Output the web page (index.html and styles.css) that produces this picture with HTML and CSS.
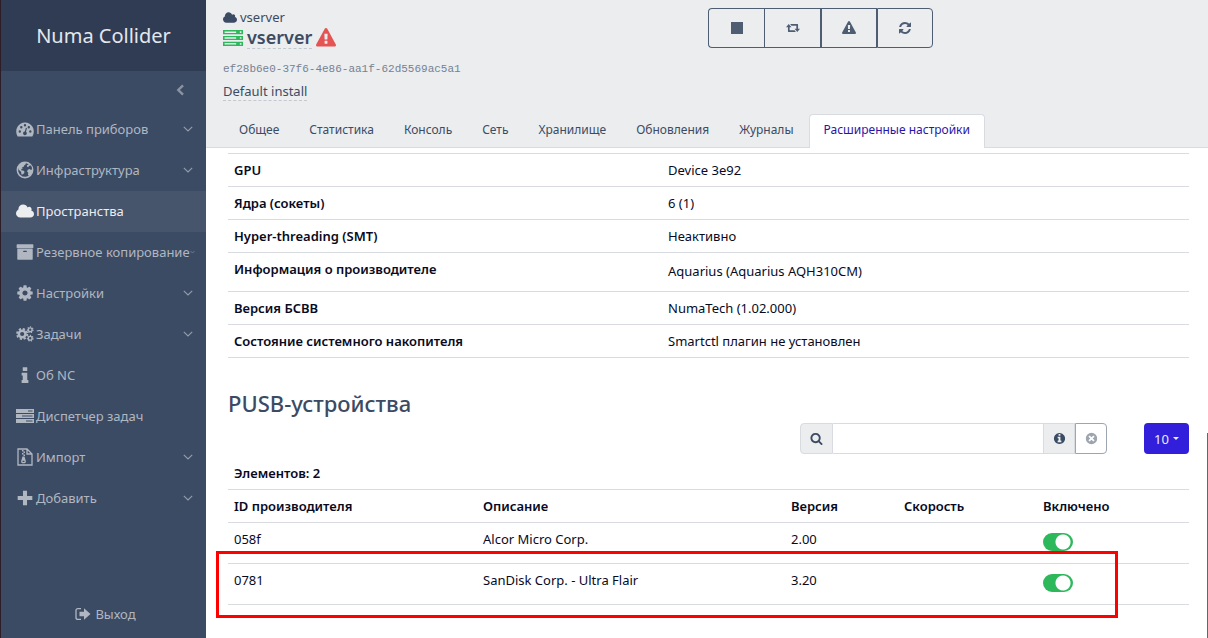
FILE: index.html
```html
<!DOCTYPE html>
<html lang="ru">
<head>
<meta charset="utf-8">
<title>vserver – Numa Collider</title>
<link rel="stylesheet" href="styles.css">
</head>
<body>
<svg class="sprite" aria-hidden="true">
  <symbol id="cloud" viewBox="64 128 1920 1408"><path d="M1984 1152q0 159-112.5 271.5T1600 1536H512q-185 0-316.5-131.5T64 1088q0-132 71-241.5T322 683q-2-28-2-43 0-212 150-362t362-150q158 0 286.5 88T1306 446q70-62 166-62 106 0 181 75t75 181q0 75-41 138 129 30 213 134.5t84 239.5z"/></symbol>
  <symbol id="warning" viewBox="0 0 1792 1792"><path d="M1024 1375v-190q0-14-9.5-23.5t-22.5-9.5h-192q-13 0-22.5 9.5t-9.5 23.5v190q0 14 9.5 23.5t22.5 9.5h192q13 0 22.5-9.5t9.5-23.5zm-2-374l18-459q0-12-10-19-13-11-24-11h-220q-11 0-24 11-10 7-10 21l17 457q0 10 10 16.5t24 6.5h185q14 0 23.5-6.5t10.5-16.5zm-14-934l768 1408q35 63-2 126-17 29-46.5 46t-63.5 17h-1536q-34 0-63.5-17t-46.5-46q-37-63-2-126l768-1408q17-31 47-49t65-18 65 18 47 49z"/></symbol>
  <symbol id="refresh" viewBox="0 0 1792 1792"><path d="M1639 1056q0 5-1 7-64 268-268 434.5t-478 166.5q-146 0-282.5-55t-243.5-157l-129 129q-19 19-45 19t-45-19-19-45v-448q0-26 19-45t45-19h448q26 0 45 19t19 45-19 45l-137 137q71 66 161 102t187 36q134 0 250-65t186-179q11-17 53-117 8-23 30-23h192q13 0 22.5 9.5t9.5 22.5zm25-800v448q0 26-19 45t-45 19h-448q-26 0-45-19t-19-45 19-45l138-138q-148-137-349-137-134 0-250 65t-186 179q-11 17-53 117-8 23-30 23h-199q-13 0-22.5-9.5t-9.5-22.5v-7q65-268 270-434.5t480-166.5q146 0 284 55.5t245 156.5l130-129q19-19 45-19t45 19 19 45z"/></symbol>
  <symbol id="cog" viewBox="0 0 1792 1792"><path d="M1152 896q0-106-75-181t-181-75-181 75-75 181 75 181 181 75 181-75 75-181zm512-109v222q0 12-8 23t-20 13l-185 28q-19 54-39 91 35 50 107 138 10 12 10 25t-9 23q-27 37-99 108t-94 71q-12 0-26-9l-138-108q-44 23-91 38-16 136-29 186-7 28-36 28h-222q-14 0-24.5-8.5t-11.5-21.5l-28-184q-49-16-90-37l-141 107q-10 9-25 9-14 0-25-11-126-114-165-168-7-10-7-23 0-12 8-23 15-21 51-66.5t54-70.5q-27-50-41-99l-183-27q-13-2-21-12.5t-8-23.5v-222q0-12 8-23t19-13l186-28q14-46 39-92-40-57-107-138-10-12-10-24 0-10 9-23 26-36 98.5-107.5t94.5-71.5q13 0 26 10l138 107q44-23 91-38 16-136 29-186 7-28 36-28h222q14 0 24.5 8.5t11.5 21.5l28 184q49 16 90 37l142-107q9-9 24-9 13 0 25 10 129 119 165 170 7 8 7 22 0 12-8 23-15 21-51 66.5t-54 70.5q26 50 41 98l183 28q13 2 21 12.5t8 23.5z"/></symbol>
  <symbol id="search" viewBox="0 0 1792 1792"><path d="M1216 832q0-185-131.5-316.5t-316.5-131.5-316.5 131.5-131.5 316.5 131.5 316.5 316.5 131.5 316.5-131.5 131.5-316.5zm512 832q0 52-38 90t-90 38q-54 0-90-38l-343-342q-179 124-399 124-143 0-273.5-55.5t-225-150-150-225-55.5-273.5 55.5-273.5 150-225 225-150 273.5-55.5 273.5 55.5 225 150 150 225 55.5 273.5q0 220-124 399l343 343q37 37 37 90z"/></symbol>
  <symbol id="info-circle" viewBox="0 0 1792 1792"><path d="M1152 1376v-160q0-14-9-23t-23-9h-96v-512q0-14-9-23t-23-9h-320q-14 0-23 9t-9 23v160q0 14 9 23t23 9h96v320h-96q-14 0-23 9t-9 23v160q0 14 9 23t23 9h448q14 0 23-9t9-23zm-128-896v-160q0-14-9-23t-23-9h-192q-14 0-23 9t-9 23v160q0 14 9 23t23 9h192q14 0 23-9t9-23zm640 416q0 209-103 385.5t-279.5 279.5-385.5 103-385.5-103-279.5-279.5-103-385.5 103-385.5 279.5-279.5 385.5-103 385.5 103 279.5 279.5 103 385.5z"/></symbol>
  <symbol id="archive" viewBox="0 0 1792 1792"><path d="M1088 832q0-26-19-45t-45-19h-256q-26 0-45 19t-19 45 19 45 45 19h256q26 0 45-19t19-45zm576-192v960q0 26-19 45t-45 19h-1408q-26 0-45-19t-19-45v-960q0-26 19-45t45-19h1408q26 0 45 19t19 45zm64-448v256q0 26-19 45t-45 19h-1536q-26 0-45-19t-19-45v-256q0-26 19-45t45-19h1536q26 0 45 19t19 45z"/></symbol>
  <symbol id="times-circle" viewBox="0 0 16 16"><path fill-rule="evenodd" d="M8 1a7 7 0 1 1 0 14A7 7 0 0 1 8 1zM5.7 4.2 4.2 5.7 6.5 8l-2.3 2.3 1.5 1.5L8 9.500l2.300 2.300 1.500-1.500L9.500 8l2.300-2.300-1.500-1.500L8 6.500z"/></symbol>
  <symbol id="retweet" viewBox="0 0 18 12"><path d="M3.500 1 7 5H4.700v4H11l1.700 2H3.200q-.7 0-.7-.7V5H0zM14.500 11 11 7h2.300V3H7L5.300 1h9.500q.7 0 .7.700V7H18z"/></symbol>
  <symbol id="gauge" viewBox="0 0 18 15"><path fill-rule="evenodd" d="M9 1a9 9 0 0 1 7.600 13.500q-.2.500-.8.500H2.200q-.6 0-.8-.5A9 9 0 0 1 9 1zM3.800 8.800a1.200 1.200 0 1 0 0 2.400 1.200 1.200 0 0 0 0-2.400zm1.500-4.300a1.200 1.200 0 1 0 0 2.400 1.200 1.200 0 0 0 0-2.400zM9 2.600A1.200 1.200 0 1 0 9 5a1.200 1.200 0 0 0 0-2.400zm3.800 1.900a1.200 1.200 0 1 0 0 2.400 1.200 1.200 0 0 0 0-2.400zm1.500 4.300a1.200 1.200 0 1 0 0 2.400 1.200 1.200 0 0 0 0-2.400zM9.900 6.300 8.800 9.900a1.900 1.900 0 1 0 1.200.3l1-3.600z"/></symbol>
  <symbol id="globe" viewBox="0 0 16 16"><path fill-rule="evenodd" d="M8 .500a7.500 7.500 0 1 1 0 15 7.500 7.500 0 0 1 0-15zM9.500 2 8 2.600l.7.900-1.500.3-.3 1.400-1.500.4.600 1.100-1.400.5.300 1.200 1.500.1 1.200 1.100-.4 1.200-1.400 1.300-.9-.2-.4-2.300L2.600 8l-.7-1.700.2 3.200 1.300 2.500 2.400 1.700 3 .4 2.600-1.100-.8-.7.300-1.900-1-.9.500-1.700 1.700-.7 1.200.8.800-.3.100-1.600-.9-1.900-1.600.2-.9 1.200-1.100-.6.200-1.300 1.500-.3z"/></symbol>
  <symbol id="cogs" viewBox="0 0 19 17"><circle cx="6.500" cy="8.500" r="3.500" fill="none" stroke="currentColor" stroke-width="2.600"/><circle cx="6.500" cy="8.500" r="5.400" fill="none" stroke="currentColor" stroke-width="2" stroke-dasharray="2.400 1.840"/><circle cx="15" cy="4" r="2" fill="none" stroke="currentColor" stroke-width="1.500"/><circle cx="15" cy="4" r="3" fill="none" stroke="currentColor" stroke-width="1.200" stroke-dasharray="1.300 1.390"/><circle cx="15" cy="13" r="2" fill="none" stroke="currentColor" stroke-width="1.500"/><circle cx="15" cy="13" r="3" fill="none" stroke="currentColor" stroke-width="1.200" stroke-dasharray="1.300 1.390"/></symbol>
  <symbol id="info" viewBox="0 0 16 16"><path d="M6 1h4v3.500H6zM5 6h5v6.500h1V15H5v-2.500h1v-4H5z"/></symbol>
  <symbol id="server" viewBox="0 0 18 14"><path fill-rule="evenodd" d="M0 0h18v4H0zM12 1.500v1h4.500v-1zM0 5h18v4H0zM6 6.500v1h10.500v-1zM0 10h18v4H0zM10 11.500v1h6.500v-1z"/></symbol>
  <symbol id="server-open" viewBox="0 0 19 15"><path fill-rule="evenodd" d="M0 0h19v4H0zM1.500 1.300v1.400h11V1.300zM16 1.200v1.600h1.500V1.200zM0 5.500h19v4H0zM1.500 6.800v1.400h11V6.800zM16 6.700v1.600h1.500V6.700zM0 11h19v4H0zM1.500 12.300v1.400h11v-1.400zM16 12.200v1.600h1.500v-1.600z"/></symbol>
  <symbol id="file-zip" viewBox="0 0 16 18"><path fill="none" stroke="currentColor" stroke-width="1.300" d="M1 1h9l5 5v11H1zM10 1v5h5"/><path d="M5 2h1.500v1.500H5zM6.500 3.500H8V5H6.500zM5 5h1.500v1.500H5zM6.500 6.500H8V8H6.500z"/><path fill-rule="evenodd" d="M5.500 8.500h2l1.300 4.500q.5 2.300-2.300 2.300T4.200 13zM5.500 12.700v1.300h2v-1.300z"/></symbol>
  <symbol id="plus" viewBox="0 0 16 16"><path d="M6.200 1.500h3.600v4.700h4.700v3.600H9.800v4.700H6.200V9.800H1.500V6.200h4.700z"/></symbol>
  <symbol id="sign-out" viewBox="0 0 16 14"><path fill="none" stroke="currentColor" stroke-width="1.300" d="M6 1.600H3Q1 1.600 1 3.600v6.800q0 2 2 2h3"/><path d="M4.500 4.700H9V1.200L15.500 7 9 12.800V9.300H4.500z"/></symbol>
  <symbol id="down" viewBox="0 0 10 6"><path fill="none" stroke="currentColor" stroke-width="1.100" d="M.8.800 5 5 9.200.800"/></symbol>
  <symbol id="left" viewBox="0 0 8 12"><path fill="none" stroke="currentColor" stroke-width="2.400" d="M7 1.300 2.300 6 7 10.700"/></symbol>
</svg>
<div class="app">
  <aside class="sidebar">
    <div class="brand">Numa Collider</div>
    <button class="minimizer" aria-label="Свернуть меню"><svg><use href="#left"/></svg></button>
    <nav class="menu">
      <a href="#"><svg class="icon"><use href="#gauge"/></svg><span>Панель приборов</span><svg class="arrow"><use href="#down"/></svg></a>
      <a href="#"><svg class="icon"><use href="#globe"/></svg><span>Инфраструктура</span><svg class="arrow"><use href="#down"/></svg></a>
      <a href="#" class="active"><svg class="icon"><use href="#cloud"/></svg><span>Пространства</span></a>
      <a href="#"><svg class="icon"><use href="#archive"/></svg><span>Резервное копирование</span><svg class="arrow arrow-small"><use href="#down"/></svg></a>
      <a href="#"><svg class="icon"><use href="#cog"/></svg><span>Настройки</span><svg class="arrow"><use href="#down"/></svg></a>
      <a href="#"><svg class="icon"><use href="#cogs"/></svg><span>Задачи</span><svg class="arrow"><use href="#down"/></svg></a>
      <a href="#"><svg class="icon"><use href="#info"/></svg><span>Об NC</span></a>
      <a href="#"><svg class="icon"><use href="#server"/></svg><span>Диспетчер задач</span></a>
      <a href="#"><svg class="icon"><use href="#file-zip"/></svg><span>Импорт</span><svg class="arrow"><use href="#down"/></svg></a>
      <a href="#"><svg class="icon"><use href="#plus"/></svg><span>Добавить</span><svg class="arrow"><use href="#down"/></svg></a>
    </nav>
    <a href="#" class="logout"><svg><use href="#sign-out"/></svg><span>Выход</span></a>
  </aside>
  <div class="page">
    <header class="header">
      <div class="summary">
        <div class="host">
          <a href="#" class="pool"><svg><use href="#cloud"/></svg><span>vserver</span></a>
          <h1><svg class="state"><use href="#server-open"/></svg><span class="editable">vserver</span><svg class="alert"><use href="#warning"/></svg></h1>
          <code>ef28b6e0-37f6-4e86-aa1f-62d5569ac5a1</code>
          <div class="note"><span class="editable">Default install</span></div>
        </div>
        <div class="actions">
          <button aria-label="Остановить"><span class="stop"></span></button>
          <button aria-label="Перезапустить"><svg class="wide"><use href="#retweet"/></svg></button>
          <button aria-label="Экстренное отключение"><svg><use href="#warning"/></svg></button>
          <button aria-label="Обновить"><svg><use href="#refresh"/></svg></button>
        </div>
      </div>
      <nav class="tabs">
        <a href="#">Общее</a><a href="#">Статистика</a><a href="#">Консоль</a><a href="#">Сеть</a><a href="#">Хранилище</a><a href="#">Обновления</a><a href="#">Журналы</a><a href="#" class="active">Расширенные настройки</a>
      </nav>
    </header>
    <main class="content">
      <table class="details">
        <tbody>
          <tr><th scope="row">GPU</th><td>Device 3e92</td></tr>
          <tr><th scope="row">Ядра (сокеты)</th><td>6 (1)</td></tr>
          <tr><th scope="row">Hyper-threading (SMT)</th><td>Неактивно</td></tr>
          <tr class="vendor"><th scope="row">Информация о производителе</th><td>Aquarius (Aquarius AQH310CM)</td></tr>
          <tr><th scope="row">Версия БСВВ</th><td>NumaTech (1.02.000)</td></tr>
          <tr><th scope="row">Состояние системного накопителя</th><td>Smartctl плагин не установлен</td></tr>
        </tbody>
      </table>
      <h2>PUSB-устройства</h2>
      <div class="toolbar">
        <div class="filter">
          <label for="filter" aria-label="Поиск"><svg><use href="#search"/></svg></label>
          <input id="filter" type="text">
          <button class="hint" aria-label="Справка"><svg><use href="#info-circle"/></svg></button>
          <button class="clear" aria-label="Очистить"><svg><use href="#times-circle"/></svg></button>
        </div>
        <button class="page-size">10<span class="caret"></span></button>
      </div>
      <div class="devices-wrap">
        <table class="devices">
          <colgroup><col class="c-id"><col class="c-desc"><col class="c-ver"><col class="c-speed"><col></colgroup>
          <thead>
            <tr><th colspan="5">Элементов: 2</th></tr>
            <tr><th>ID производителя</th><th>Описание</th><th>Версия</th><th>Скорость</th><th>Включено</th></tr>
          </thead>
          <tbody>
            <tr><td>058f</td><td>Alcor Micro Corp.</td><td>2.00</td><td></td><td><input class="toggle" type="checkbox" checked aria-label="Включено: 058f"></td></tr>
            <tr><td>0781</td><td>SanDisk Corp. - Ultra Flair</td><td>3.20</td><td></td><td><input class="toggle" type="checkbox" checked aria-label="Включено: 0781"></td></tr>
          </tbody>
        </table>
        <div class="highlight"></div>
      </div>
      <div class="scroll-thumb"></div>
    </main>
  </div>
</div>
</body>
</html>
```
FILE: styles.css
```css
* { box-sizing: border-box; }
body { margin: 0; font: 13px/20px "Noto Sans", sans-serif; color: #080a1e; background: #fff; }
a { color: inherit; text-decoration: none; }
button { font: inherit; color: inherit; padding: 0; margin: 0; background: none; border: 0; cursor: pointer; }
svg { fill: currentColor; flex: none; }
.sprite { position: absolute; width: 0; height: 0; }

.app { display: grid; grid-template-columns: 206px minmax(0, 1fr); min-height: 100vh; }

.sidebar { display: flex; flex-direction: column; background: #3c4b64; border-left: 1px solid #2c1d29; color: #b0b7c1; }
.brand { display: flex; align-items: center; justify-content: center; height: 71px; background: #303c54; color: #e4e7ec; font-size: 20px; }
.minimizer { display: flex; align-items: center; justify-content: flex-end; height: 38px; padding-right: 22px; color: #8a93a2; }
.minimizer svg { width: 8px; height: 12px; }
.menu a { display: flex; align-items: center; height: 41px; padding: 0 13px 2px 14px; white-space: nowrap; }
.menu a.active { background: #46546c; color: #ebedef; }
.menu .icon { width: 18px; height: 18px; margin: 0 2px 0 1px; }
.arrow { width: 10px; height: 6px; margin-left: auto; color: #949eac; }
.arrow-small { width: 5px; height: 4px; }
.logout { display: flex; align-items: center; justify-content: center; gap: 4px; margin-top: auto; padding: 12px 0 14px 4px; }
.logout svg { width: 16px; height: 14px; }

.page { display: flex; flex-direction: column; }
.header { background: #ebedef; border-bottom: 1px solid #d8dbe0; color: #3c4b64; }
.summary { display: grid; grid-template-columns: 485px 1fr; padding: 8px 17px 0; height: 114px; }
.pool { display: flex; align-items: center; gap: 3px; line-height: 18px; }
.pool svg { width: 14px; height: 11px; }
h1 { display: flex; align-items: center; gap: 4px; margin: 0; font-size: 18px; line-height: 22px; font-weight: 600; }
h1 .state { width: 20px; height: 16px; color: #2eb85c; }
h1 .alert { width: 20px; height: 20px; color: #e55353; }
.editable { border-bottom: 1px dashed #c4c9d0; }
.host code { display: block; margin-top: 11px; font: 11px/18px "Liberation Mono", monospace; color: #768192; }
.note { margin-top: 3px; }
.actions { display: flex; align-items: flex-start; }
.actions button { display: flex; align-items: center; justify-content: center; width: 56px; height: 40px; border: 1px solid #4f5d73; color: #4f5d73; }
.actions button:first-child { border-right: 0; border-radius: 4px 0 0 4px; }
.actions button:nth-child(2) { width: 57px; }
.actions button:last-child { border-radius: 0 4px 4px 0; }
.actions svg { width: 14px; height: 14px; }
.stop { width: 12px; height: 12px; background: #4f5d73; }

.tabs { display: flex; padding-left: 18px; margin-bottom: -1px; font-size: 12px; }
.tabs a { height: 34px; padding: 5px 14px; border: 1px solid transparent; border-bottom: 0; border-radius: 4px 4px 0 0; white-space: nowrap; }
.tabs a.active { background: #fff; border-color: #d8dbe0; color: #2617a8; }

.content { position: relative; flex: 1; padding: 5px 19px 0 22px; }
table { width: 100%; border-collapse: collapse; table-layout: fixed; }
th, td { padding: 6px; text-align: left; vertical-align: top; border-top: 1px solid #d8dbe0; border-bottom: 1px solid #d8dbe0; }
th { font-weight: 600; }
.details th { width: 434px; }
.vendor td { padding-top: 8px; padding-bottom: 10px; }
h2 { margin: 30px 0 5px; font-size: 22px; line-height: 30px; font-weight: 500; color: #3c4b64; }
.toolbar { display: flex; justify-content: flex-end; gap: 37px; }
.filter { display: flex; width: 307px; height: 31px; }
.filter label, .filter button { display: flex; align-items: center; justify-content: center; width: 32px; border: 1px solid #d8dbe0; background: #ebedef; color: #3c4b64; }
.filter label { width: 33px; border-radius: 4px 0 0 4px; }
.filter input { flex: 1; min-width: 0; border: 1px solid #d8dbe0; border-width: 1px 0; font: inherit; }
.filter svg { width: 13px; height: 13px; }
.filter .clear { background: #fff; border-color: #9da5b1; border-radius: 0 4px 4px 0; color: #9da5b1; }
.page-size { display: flex; align-items: center; justify-content: center; gap: 4px; width: 45px; height: 31px; border-radius: 4px; background: #321fdb; color: #ebedef; }
.caret { border: 3px solid transparent; border-top-color: currentColor; border-bottom: 0; }
.devices-wrap { position: relative; margin-top: 2px; }
.devices thead tr:first-child th { border-top-color: transparent; }
.devices tbody tr { height: 41px; }
.c-id { width: 249px; }
.c-desc { width: 308px; }
.c-ver { width: 113px; }
.c-speed { width: 139px; }
.toggle { display: block; appearance: none; width: 30px; height: 18px; margin: 4px 0 0; border-radius: 9px; background: radial-gradient(circle at 20px 9px, #fff 7px, #2eb85c 8px); }
.highlight { position: absolute; left: -12px; right: 71px; bottom: -13px; height: 67px; border: 3px solid #f00; }
.scroll-thumb { position: absolute; right: 0; top: 285px; bottom: 0; width: 1px; background: #666; }
```
